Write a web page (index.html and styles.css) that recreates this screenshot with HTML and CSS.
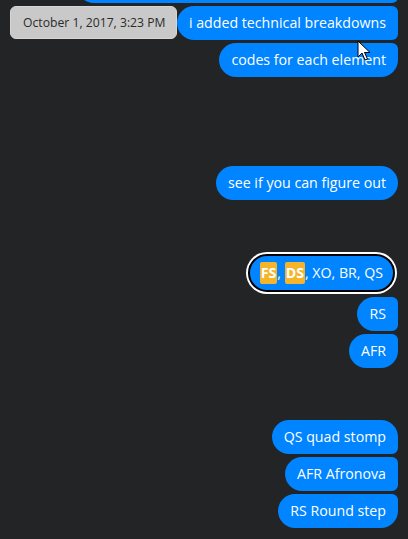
FILE: index.html
```html
<!DOCTYPE html>
<html>
<head>
<meta charset="utf-8">
<link rel="stylesheet" href="styles.css">
</head>
<body>
<div class="thread">
  <div class="msg cut first-cut"></div>
  <div class="msg mid">i added technical breakdowns</div>
  <div class="msg last">codes for each element</div>

  <div class="msg solo gap-lg">see if you can figure out</div>

  <div class="msg solo ring"><span class="hl">FS</span>, <span class="hl">DS</span>, XO, BR, QS</div>
  <div class="msg mid">RS</div>
  <div class="msg last">AFR</div>

  <div class="msg first gap-md">QS quad stomp</div>
  <div class="msg mid">AFR Afronova</div>
  <div class="msg last">RS Round step</div>
</div>

<div class="tooltip">October 1, 2017, 3:23 PM</div>

<svg class="cursor" width="14" height="22" viewBox="0 0 14 22">
  <path d="M1 1 L1 17 L5 13 L8 20 L10.5 19 L7.5 12.5 L13 12.5 Z" fill="#fff" stroke="#000" stroke-width="1" stroke-linejoin="miter"/>
</svg>
</body>
</html>
```
FILE: styles.css
```css
html, body {
  margin: 0;
  padding: 0;
  background: #232426;
  width: 408px;
  height: 539px;
  overflow: hidden;
}

.thread {
  display: flex;
  flex-direction: column;
  align-items: flex-end;
  gap: 3px;
  padding-right: 10px;
  font-family: "Open Sans", "Noto Sans", sans-serif;
}

.msg {
  background: #0084ff;
  color: #fff;
  font-size: 14.2px;
  line-height: 33px;
  height: 34px;
  padding: 0 12px;
  box-sizing: border-box;
  white-space: nowrap;
}

.cut {
  width: 321px;
  margin-top: -31px;
  border-radius: 17px 6px 6px 17px;
}

.first { border-radius: 17px 17px 6px 17px; }
.mid   { border-radius: 17px 6px 6px 17px; }
.last  { border-radius: 17px 6px 17px 17px; }
.solo  { border-radius: 17px; }

.gap-lg { margin-top: 86px; }
.gap-md { margin-top: 49px; }

.ring {
  height: 38px;
  line-height: 33px;
  border: 2px solid #000;
  box-shadow: 0 0 0 2px #fff;
  margin-top: 51px;
  margin-right: 3px;
  margin-bottom: 2px;
  border-radius: 19px;
  padding: 0 10px;
}

.hl {
  background: #f6b42a;
  display: inline-block;
  line-height: 22px;
  padding: 0 1px;
  border-radius: 2px;
  font-weight: 700;
}

.tooltip {
  position: absolute;
  left: 10px;
  top: 6px;
  width: 167px;
  height: 33px;
  box-sizing: border-box;
  background: #c9c9c9;
  border: 1px solid #d6d6d6;
  border-radius: 6px;
  color: #2b2b2b;
  font-family: "Open Sans", "Noto Sans", sans-serif;
  font-size: 12.2px;
  line-height: 31px;
  padding-left: 12px;
}

.cursor {
  position: absolute;
  left: 357px;
  top: 40px;
}
```
